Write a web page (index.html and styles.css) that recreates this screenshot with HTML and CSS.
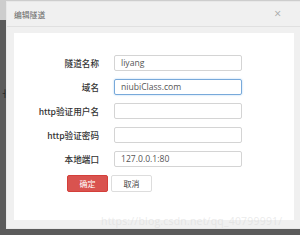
FILE: index.html
```html
<!DOCTYPE html>
<html>
<head>
<meta charset="utf-8">
<link rel="stylesheet" href="styles.css">
</head>
<body>
<div class="page">
  <span class="bg-mark">ㅓ</span>
  <div class="modal">
    <div class="modal-header">
      <span class="title">编辑隧道</span>
      <span class="close">×</span>
    </div>
    <div class="modal-body">
      <div class="panel">
        <form class="form">
          <label class="label">隧道名称</label>
          <div class="input">liyang</div>
          <label class="label">域名</label>
          <div class="input focus">niubiClass.com</div>
          <label class="label">http验证用户名</label>
          <div class="input"></div>
          <label class="label">http验证密码</label>
          <div class="input"></div>
          <label class="label">本地端口</label>
          <div class="input">127.0.0.1:80</div>
          <div class="actions">
            <span class="btn btn-primary">确定</span>
            <span class="btn btn-default">取消</span>
          </div>
        </form>
      </div>
    </div>
  </div>
  <div class="watermark">https://blog.csdn.net/qq_40799991/</div>
</div>
</body>
</html>
```

FILE: styles.css
```css
html, body {
  margin: 0;
  padding: 0;
}
body {
  width: 300px;
  height: 235px;
  overflow: hidden;
  font-family: "Open Sans", "Noto Sans CJK SC", sans-serif;
}
.page {
  position: relative;
  width: 300px;
  height: 235px;
  overflow: hidden;
  background: linear-gradient(#cdcdcd 0 20px, #5b5b5b 20px);
  padding-top: 2px;
  box-sizing: border-box;
}
.bg-mark {
  position: absolute;
  left: 0;
  top: 88px;
  font-size: 9px;
  color: #222;
  line-height: 12px;
}
.modal {
  margin-left: 7px;
  width: 294px;
  height: 226px;
  background: #f0f0f0;
  box-shadow: 0 0 0 1px #e8e8e8;
  display: flex;
  flex-direction: column;
}
.modal-header {
  height: 25px;
  border-bottom: 1px solid #e0e0e0;
  display: flex;
  align-items: center;
  justify-content: space-between;
  padding: 0 20px 0 7px;
  box-sizing: border-box;
  flex: none;
}
.title {
  font-size: 7.8px;
  color: #666;
  font-family: "Noto Sans CJK SC", sans-serif;
}
.close {
  font-size: 12px;
  color: #a8a8a8;
  line-height: 1;
}
.modal-body {
  flex: 1;
  padding: 6px 7px 8px 7px;
  display: flex;
}
.panel {
  flex: 1;
  background: #fff;
}
.form {
  margin: 0;
  padding-top: 22px;
  display: grid;
  grid-template-columns: 85px 128px;
  grid-auto-rows: 16px;
  column-gap: 15px;
  row-gap: 8px;
}
.label {
  font-size: 8.6px;
  font-weight: 500;
  color: #333;
  text-align: right;
  line-height: 16px;
  font-family: "Noto Sans CJK SC", sans-serif;
}
.input {
  border: 1px solid #d4d4d4;
  border-radius: 2px;
  box-sizing: border-box;
  height: 16px;
  padding-left: 6px;
  font-size: 8.6px;
  line-height: 14px;
  color: #555;
}
.input.focus {
  border-color: #78a9da;
  box-shadow: 0 0 2px rgba(102, 175, 233, 0.6);
}
.actions {
  grid-column: 1 / span 2;
  display: flex;
  gap: 3px;
  padding-left: 53px;
  height: 17px;
}
.btn {
  width: 41px;
  height: 17px;
  box-sizing: border-box;
  border-radius: 2px;
  font-size: 8px;
  line-height: 15px;
  text-align: center;
  font-family: "Noto Sans CJK SC", sans-serif;
}
.btn-primary {
  background: #d9534f;
  border: 1px solid #d43f3a;
  color: #fff;
}
.btn-default {
  background: #fff;
  border: 1px solid #ddd;
  color: #444;
}
.watermark {
  position: absolute;
  left: 101px;
  top: 214px;
  font-size: 10.5px;
  color: rgba(215, 215, 215, 0.5);
  font-family: "Open Sans", sans-serif;
  letter-spacing: 0.2px;
}
```
